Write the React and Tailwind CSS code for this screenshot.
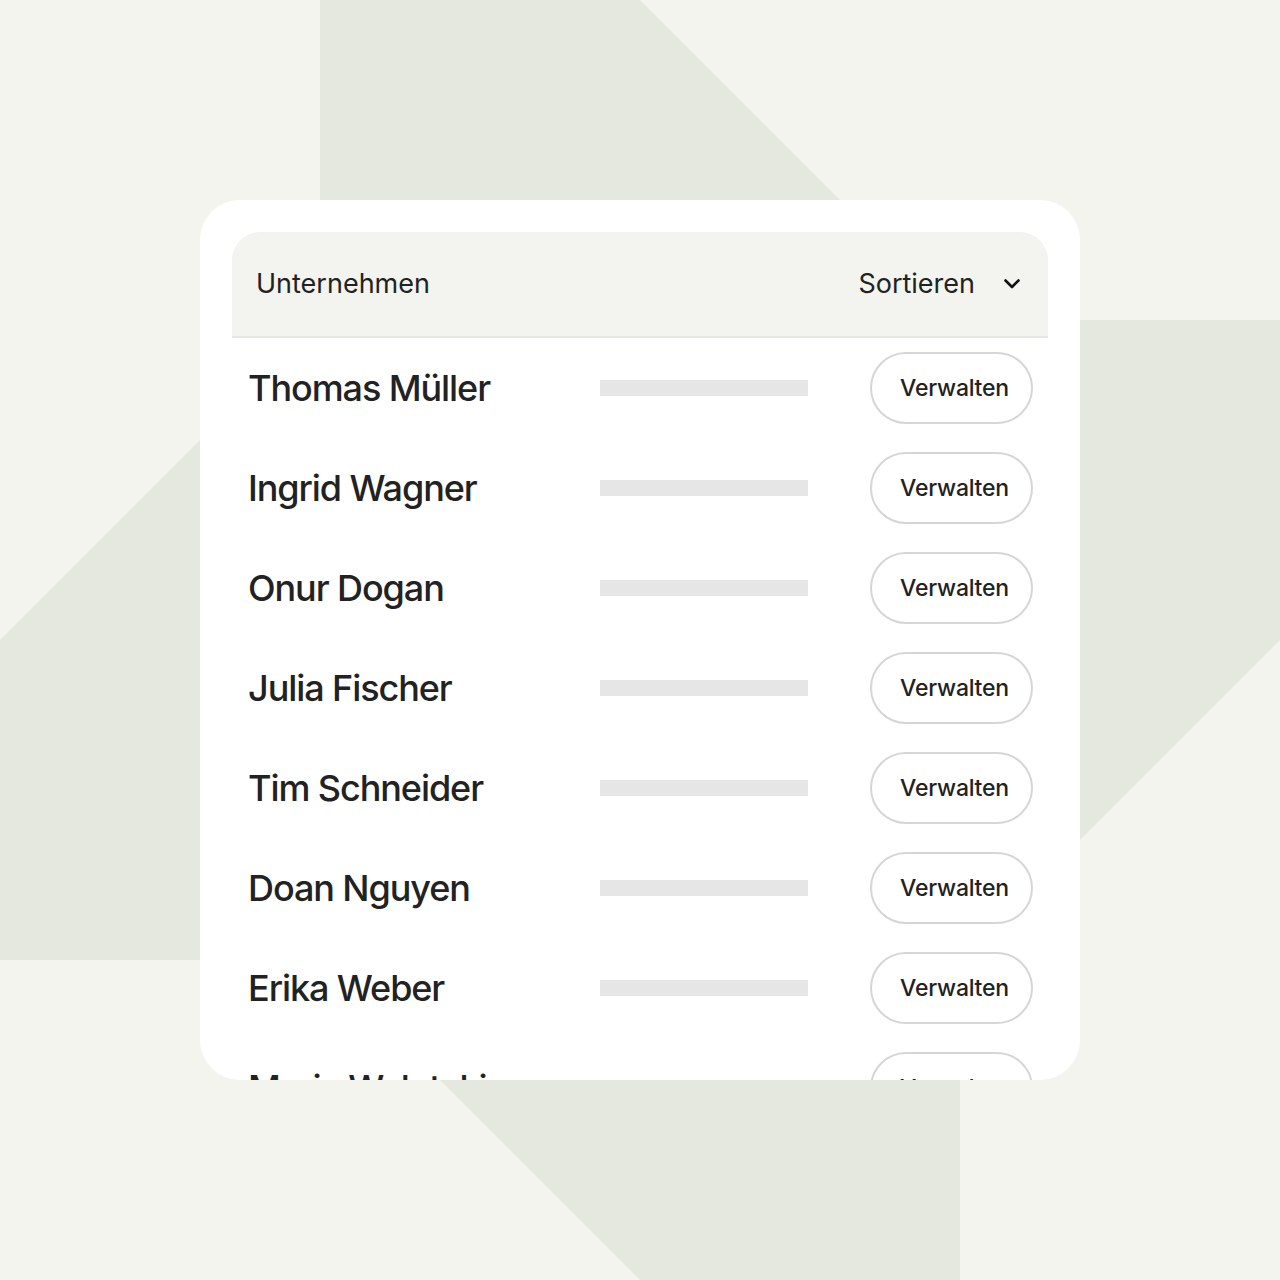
import React from 'react'

const people = [
  'Thomas Müller',
  'Ingrid Wagner',
  'Onur Dogan',
  'Julia Fischer',
  'Tim Schneider',
  'Doan Nguyen',
  'Erika Weber',
  'Maria Walutzki',
]

function Backdrop() {
  return (
    <svg className="absolute inset-0 w-full h-full" viewBox="0 0 1280 1280" preserveAspectRatio="none">
      <polygon
        fill="#e5e8de"
        points="320,0 640,0 960,320 1280,320 1280,640 960,960 960,1280 640,1280 320,960 0,960 0,640 320,320"
      />
    </svg>
  )
}

function Row({ name }) {
  return (
    <div className="h-[100px] shrink-0 flex items-center pl-4 pr-[15px]">
      <div className="w-[352px] text-[36px] font-medium tracking-[-0.03em] text-[#222]">{name}</div>
      <div className="w-[208px] h-4 bg-[#e6e6e6]" />
      <button className="ml-auto w-[163px] h-[72px] pl-[6px] rounded-full border-2 border-[#d6d6d6] bg-white text-[23px] font-medium text-[#222] tracking-[-0.01em]">
        Verwalten
      </button>
    </div>
  )
}

export default function App() {
  return (
    <div className="relative w-[1280px] h-[1280px] bg-[#f3f4ee] overflow-hidden font-['Inter',sans-serif]">
      <Backdrop />
      <div className="relative mx-auto mt-[200px] w-[880px] h-[880px] bg-white rounded-[40px] overflow-hidden p-8 pb-0 flex flex-col">
        <div className="h-[106px] shrink-0 flex items-center bg-[#f3f4ef] rounded-t-[28px] border-b-2 border-[#e6e7e1] pl-6 pr-[28px]">
          <span className="text-[27px] text-[#222]">Unternehmen</span>
          <span className="ml-auto text-[27px] text-[#222]">Sortieren</span>
          <svg className="ml-[29px]" width="16" height="10" viewBox="0 0 16 10" fill="none">
            <path d="M1.5 1.5 8 8l6.5-6.5" stroke="#111" strokeWidth="2.6" strokeLinecap="round" strokeLinejoin="round" />
          </svg>
        </div>
        {people.map(p => (
          <Row key={p} name={p} />
        ))}
      </div>
    </div>
  )
}
